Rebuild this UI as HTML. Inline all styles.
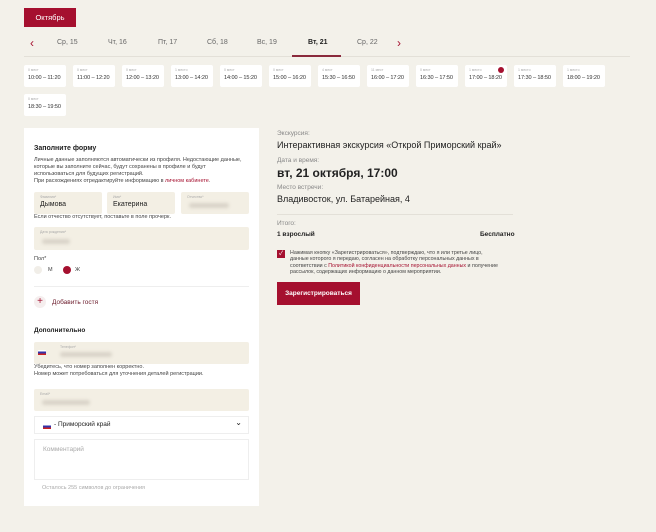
<!DOCTYPE html>
<html><head><meta charset="utf-8"><style>
*{box-sizing:border-box;margin:0;padding:0}
body{width:656px;height:532px;background:#f3f1ea;font-family:"Liberation Sans","Noto Sans CJK SC",sans-serif;color:#222;position:relative;overflow:hidden}
.a{position:absolute;white-space:nowrap}
.btn{background:#a5102f;color:#fff}
.slot{position:absolute;width:42px;height:22px;background:#fff;border-radius:2px}
.slot i{position:absolute;left:4px;top:3px;font-size:3.5px;color:#aaa;font-style:normal;white-space:nowrap}
.slot b{position:absolute;left:4px;top:10px;font-size:5.6px;font-weight:normal;color:#333;white-space:nowrap;letter-spacing:-0.1px}
.tab{position:absolute;top:39px;font-size:7px;color:#666}
.inp{position:absolute;background:#f3efe4;border-radius:2px}
.inp i{position:absolute;left:6px;top:3px;font-size:3.5px;color:#aaa;font-style:normal}
.blur{position:absolute;height:5px;background:#d9d3c8;border-radius:3px;filter:blur(1.5px)}
.s{font-size:5.5px;color:#444;line-height:7px}
.lbl{font-size:6.5px;color:#888}
</style></head><body>
<div class="a btn" style="left:24px;top:8px;width:52px;height:19px;font-size:7.5px;line-height:19px;text-align:center">Октябрь</div>
<div class="a" style="left:30px;top:36px;font-size:12px;color:#a5102f">&#8249;</div>
<div class="a" style="left:397px;top:36px;font-size:12px;color:#a5102f">&#8250;</div>
<div class="tab" style="left:57px">Ср, 15</div>
<div class="tab" style="left:108px">Чт, 16</div>
<div class="tab" style="left:158px">Пт, 17</div>
<div class="tab" style="left:207px">Сб, 18</div>
<div class="tab" style="left:257px">Вс, 19</div>
<div class="tab" style="left:308px;color:#222;font-weight:bold">Вт, 21</div>
<div class="tab" style="left:357px">Ср, 22</div>
<div class="a" style="left:24px;top:56px;width:606px;height:1px;background:#e3e0d8"></div>
<div class="a" style="left:292px;top:55px;width:49px;height:2px;background:#8a2a3c"></div>

<div class="slot" style="left:24px;top:65px"><i>0 мест</i><b>10:00 – 11:20</b></div>
<div class="slot" style="left:73px;top:65px"><i>0 мест</i><b>11:00 – 12:20</b></div>
<div class="slot" style="left:122px;top:65px"><i>0 мест</i><b>12:00 – 13:20</b></div>
<div class="slot" style="left:171px;top:65px"><i>1 место</i><b>13:00 – 14:20</b></div>
<div class="slot" style="left:220px;top:65px"><i>0 мест</i><b>14:00 – 15:20</b></div>
<div class="slot" style="left:269px;top:65px"><i>0 мест</i><b>15:00 – 16:20</b></div>
<div class="slot" style="left:318px;top:65px"><i>4 мест</i><b>15:30 – 16:50</b></div>
<div class="slot" style="left:367px;top:65px"><i>11 мест</i><b>16:00 – 17:20</b></div>
<div class="slot" style="left:416px;top:65px"><i>0 мест</i><b>16:30 – 17:50</b></div>
<div class="slot" style="left:465px;top:65px"><i>1 место</i><b>17:00 – 18:20</b><span style="position:absolute;right:3px;top:2px;width:6px;height:6px;border-radius:50%;background:#a5102f"></span></div>
<div class="slot" style="left:514px;top:65px"><i>1 место</i><b>17:30 – 18:50</b></div>
<div class="slot" style="left:563px;top:65px"><i>1 место</i><b>18:00 – 19:20</b></div>
<div class="slot" style="left:24px;top:94px"><i>0 мест</i><b>18:30 – 19:50</b></div>

<div class="a" style="left:24px;top:128px;width:235px;height:378px;background:#fff"></div>
<div class="a" style="left:34px;top:145px;font-size:7px;font-weight:bold">Заполните форму</div>
<div class="a s" style="left:34px;top:157px">Личные данные заполняются автоматически из профиля. Недостающие данные,<br>которые вы заполните сейчас, будут сохранены в профиле и будут<br>использоваться для будущих регистраций.<br>При расхождениях отредактируйте информацию в <span style="color:#a5102f">личном кабинете</span>.</div>
<div class="inp" style="left:34px;top:192px;width:68px;height:22px"><i>Фамилия*</i><span class="a" style="left:6px;top:9px;font-size:7px">Дымова</span></div>
<div class="inp" style="left:107px;top:192px;width:68px;height:22px"><i>Имя*</i><span class="a" style="left:6px;top:9px;font-size:7px">Екатерина</span></div>
<div class="inp" style="left:181px;top:192px;width:68px;height:22px"><i>Отчество*</i><div class="blur" style="left:8px;top:11px;width:40px"></div></div>
<div class="a s" style="left:34px;top:214px">Если отчество отсутствует, поставьте в поле прочерк.</div>
<div class="inp" style="left:34px;top:227px;width:215px;height:23px"><i>Дата рождения*</i><div class="blur" style="left:8px;top:12px;width:28px"></div></div>
<div class="a s" style="left:34px;top:256px">Пол*</div>
<div class="a" style="left:34px;top:266px;width:8px;height:8px;border-radius:50%;background:#f1eee8"></div>
<div class="a s" style="left:48px;top:267px">М</div>
<div class="a" style="left:63px;top:266px;width:8px;height:8px;border-radius:50%;background:#a5102f"></div>
<div class="a s" style="left:75px;top:267px">Ж</div>
<div class="a" style="left:34px;top:286px;width:215px;height:1px;background:#eee"></div>
<div class="a" style="left:34px;top:296px;width:12px;height:12px;border-radius:50%;background:#f5eeee;color:#a5102f;font-size:10px;line-height:12px;text-align:center">+</div>
<div class="a" style="left:52px;top:299px;font-size:6.5px;color:#6a1a2a">Добавить гостя</div>
<div class="a" style="left:34px;top:327px;font-size:6.5px;font-weight:bold">Дополнительно</div>
<div class="inp" style="left:34px;top:342px;width:215px;height:22px"><i style="left:26px">Телефон*</i><div class="a" style="left:4px;top:8px;width:8px;height:5px;background:linear-gradient(#fff 33%,#33a 33%,#33a 66%,#c22 66%)"></div><div class="blur" style="left:26px;top:10px;width:52px"></div></div>
<div class="a s" style="left:34px;top:364px">Убедитесь, что номер заполнен корректно.<br>Номер может потребоваться для уточнения деталей регистрации.</div>
<div class="inp" style="left:34px;top:389px;width:215px;height:22px"><i>Email*</i><div class="blur" style="left:8px;top:11px;width:48px"></div></div>
<div class="a" style="left:34px;top:416px;width:215px;height:18px;border:1px solid #eee"><div class="a" style="left:8px;top:7px;width:8px;height:5px;background:linear-gradient(#fff 33%,#33a 33%,#33a 66%,#c22 66%)"></div><span class="a" style="left:19px;top:4px;font-size:6.5px">- Приморский край</span><span class="a" style="right:6px;top:1px;font-size:8px">&#8964;</span></div>
<div class="a" style="left:34px;top:439px;width:215px;height:41px;border:1px solid #eee"><span class="a" style="left:8px;top:6px;font-size:6.5px;color:#aaa">Комментарий</span></div>
<div class="a" style="left:42px;top:485px;font-size:5.5px;color:#aaa">Осталось 255 символов до ограничения</div>

<div class="a lbl" style="left:277px;top:130px">Экскурсия:</div>
<div class="a" style="left:277px;top:140px;font-size:9px">Интерактивная экскурсия «Открой Приморский край»</div>
<div class="a lbl" style="left:277px;top:157px">Дата и время:</div>
<div class="a" style="left:277px;top:166px;font-size:12px;font-weight:bold">вт, 21 октября, 17:00</div>
<div class="a lbl" style="left:277px;top:184px">Место встречи:</div>
<div class="a" style="left:277px;top:194px;font-size:9px">Владивосток, ул. Батарейная, 4</div>
<div class="a" style="left:277px;top:214px;width:236px;height:1px;background:#e3e0d8"></div>
<div class="a lbl" style="left:277px;top:220px">Итого:</div>
<div class="a" style="left:277px;top:231px;font-size:6.5px;font-weight:bold">1 взрослый</div>
<div class="a" style="left:480px;top:231px;font-size:6.5px;font-weight:bold">Бесплатно</div>
<div class="a" style="left:277px;top:250px;width:8px;height:8px;background:#a5102f;color:#fff;font-size:6px;line-height:8px;text-align:center">✓</div>
<div class="a s" style="left:290px;top:250px;font-size:5.3px;line-height:6.3px">Нажимая кнопку «Зарегистрироваться», подтверждаю, что я или третье лицо,<br>данные которого я передаю, согласен на обработку персональных данных в<br>соответствии с <span style="color:#a5102f">Политикой конфиденциальности персональных данных</span> и получение<br>рассылок, содержащих информацию о данном мероприятии.</div>
<div class="a btn" style="left:277px;top:282px;width:83px;height:23px;font-size:6.5px;font-weight:bold;line-height:23px;text-align:center">Зарегистрироваться</div>
</body></html>
